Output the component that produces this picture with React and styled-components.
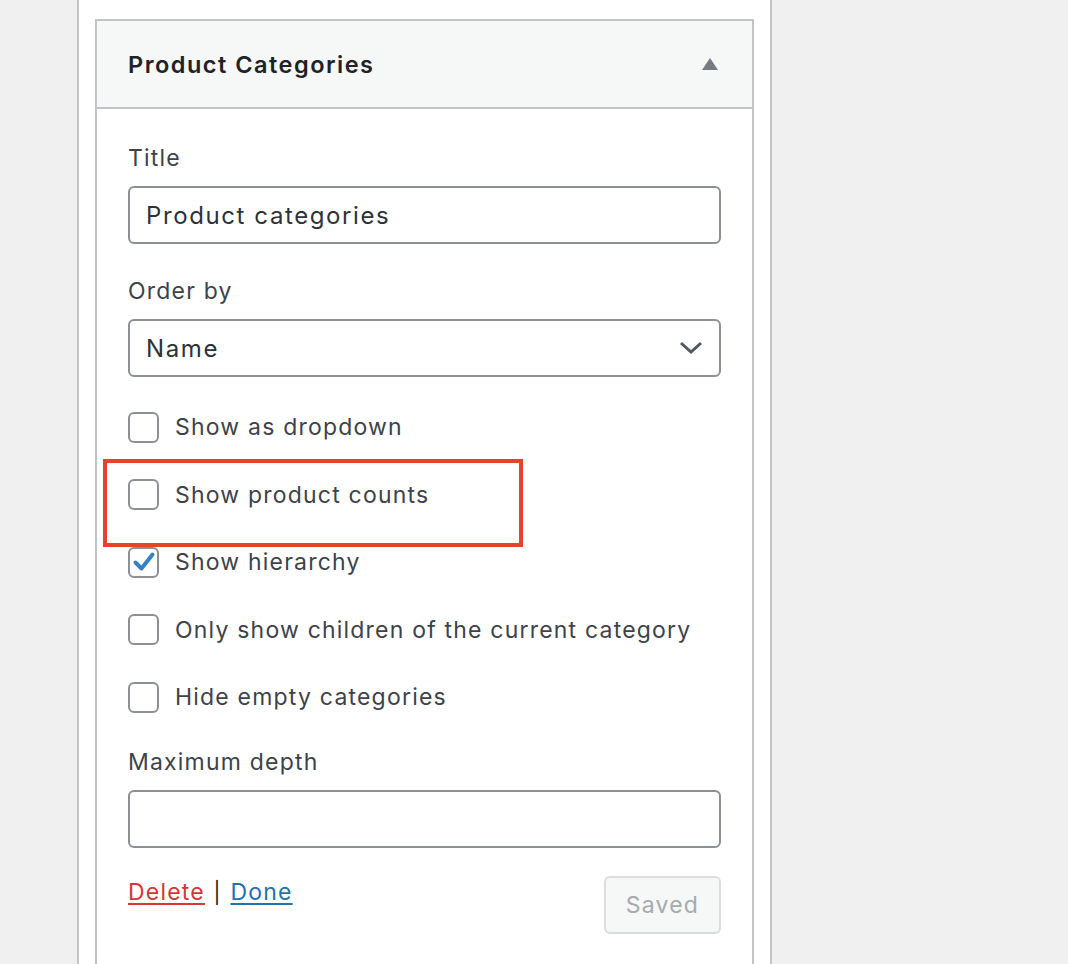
import React from 'react'
import styled, { createGlobalStyle } from 'styled-components'

const GlobalStyle = createGlobalStyle`
  html, body {
    margin: 0;
    padding: 0;
    background: #f0f0f1;
    font-family: Inter, "Noto Sans", "Liberation Sans", sans-serif;
  }
`

const Page = styled.div`
  height: 964px;
  overflow: hidden;
  display: flex;
`

const Sidebar = styled.div`
  margin-left: 77px;
  width: 695px;
  box-sizing: border-box;
  background: #fff;
  border-left: 2px solid #c3c4c7;
  border-right: 2px solid #c3c4c7;
  padding: 0 16px;
  display: flex;
  flex-direction: column;
`

const PrevWidget = styled.div`
  height: 1px;
  background: #f0f0f1;
  box-shadow: 0 1px 2px rgba(0, 0, 0, 0.06);
`

const Widget = styled.div`
  margin-top: 19px;
  border: 2px solid #c3c4c7;
  background: #fff;
`

const Header = styled.div`
  height: 86px;
  background: #f6f7f7;
  border-bottom: 2px solid #c3c4c7;
  display: flex;
  align-items: center;
  justify-content: space-between;
  padding: 0 34px 0 31px;
`

const HeaderTitle = styled.h3`
  margin: 0;
  font-size: 23.5px;
  font-weight: 600;
  color: #1d2327;
  letter-spacing: 1.5px;
`

const Body = styled.div`
  padding: 33px 31px 40px;
  display: flex;
  flex-direction: column;
  letter-spacing: 1.2px;
`

const Label = styled.label`
  display: block;
  font-size: 23px;
  line-height: 32px;
  color: #3c434a;
  margin-top: ${(p) => p.$mt || 0}px;
`

const TextInput = styled.div`
  margin-top: 12px;
  height: 58px;
  box-sizing: border-box;
  border: 2px solid #8c8f94;
  border-radius: 6px;
  padding: 0 16px;
  display: flex;
  align-items: center;
  justify-content: space-between;
  font-size: 24px;
  letter-spacing: 1.6px;
  color: #2c3338;
`

const CheckList = styled.div`
  margin-top: 32px;
  display: flex;
  flex-direction: column;
  gap: 31.5px;
`

const CheckRow = styled.div`
  position: relative;
  height: 36px;
  display: flex;
  align-items: center;
  gap: 16px;
  font-size: 23px;
  color: #3c434a;
`

const Box = styled.span`
  width: 31px;
  height: 31px;
  box-sizing: border-box;
  border: 2px solid #8c8f94;
  border-radius: 6px;
  background: #fff;
  display: flex;
  align-items: center;
  justify-content: center;
  flex-shrink: 0;
`

const Highlight = styled.div`
  position: absolute;
  left: -25px;
  top: -18px;
  width: 420px;
  height: 88px;
  box-sizing: border-box;
  border: 4px solid #e8412c;
  pointer-events: none;
`

const Footer = styled.div`
  margin-top: 28px;
  display: flex;
  justify-content: space-between;
  align-items: flex-start;
`

const Links = styled.div`
  font-size: 23px;
  line-height: 32px;
  color: #1d2327;
`

const Sep = styled.span`
  color: #1d2327;
  font-size: 21px;
  margin: 0 1px;
`

const Link = styled.a`
  color: ${(p) => (p.$danger ? '#d63638' : '#2271b1')};
  text-decoration: underline;
  text-underline-offset: 3px;
`

const SavedButton = styled.button`
  width: 117px;
  height: 58px;
  border: 2px solid #dcdcde;
  border-radius: 6px;
  background: #f6f7f7;
  color: #a7aaad;
  font-family: inherit;
  font-size: 23px;
  letter-spacing: 1.2px;
  padding: 0;
`

const Check = ({ checked, children, highlight }) => (
  <CheckRow>
    <Box>
      {checked && (
        <svg width="24" height="24" viewBox="0 0 24 24">
          <path d="M3.5 12.5 L9.5 18.5 L20.5 4.5" fill="none" stroke="#3582c4" strokeWidth="4" strokeLinecap="round" strokeLinejoin="round" />
        </svg>
      )}
    </Box>
    {children}
    {highlight && <Highlight />}
  </CheckRow>
)

const App = () => {
  return (
    <>
      <GlobalStyle />
      <Page>
        <Sidebar>
          <PrevWidget />
          <Widget>
            <Header>
              <HeaderTitle>Product Categories</HeaderTitle>
              <svg width="16" height="12" viewBox="0 0 16 12">
                <path d="M8 0 L16 12 L0 12 Z" fill="#787c82" />
              </svg>
            </Header>
            <Body>
              <Label>Title</Label>
              <TextInput>Product categories</TextInput>
              <Label $mt={31}>Order by</Label>
              <TextInput>
                Name
                <svg width="24" height="14" viewBox="0 0 24 14">
                  <path d="M2 2 L12 11 L22 2" fill="none" stroke="#50575e" strokeWidth="3" />
                </svg>
              </TextInput>
              <CheckList>
                <Check>Show as dropdown</Check>
                <Check highlight>Show product counts</Check>
                <Check checked>Show hierarchy</Check>
                <Check>Only show children of the current category</Check>
                <Check>Hide empty categories</Check>
              </CheckList>
              <Label $mt={31}>Maximum depth</Label>
              <TextInput />
              <Footer>
                <Links>
                  <Link $danger href="#">Delete</Link> <Sep>|</Sep> <Link href="#">Done</Link>
                </Links>
                <SavedButton>Saved</SavedButton>
              </Footer>
            </Body>
          </Widget>
        </Sidebar>
      </Page>
    </>
  )
}

export default App
